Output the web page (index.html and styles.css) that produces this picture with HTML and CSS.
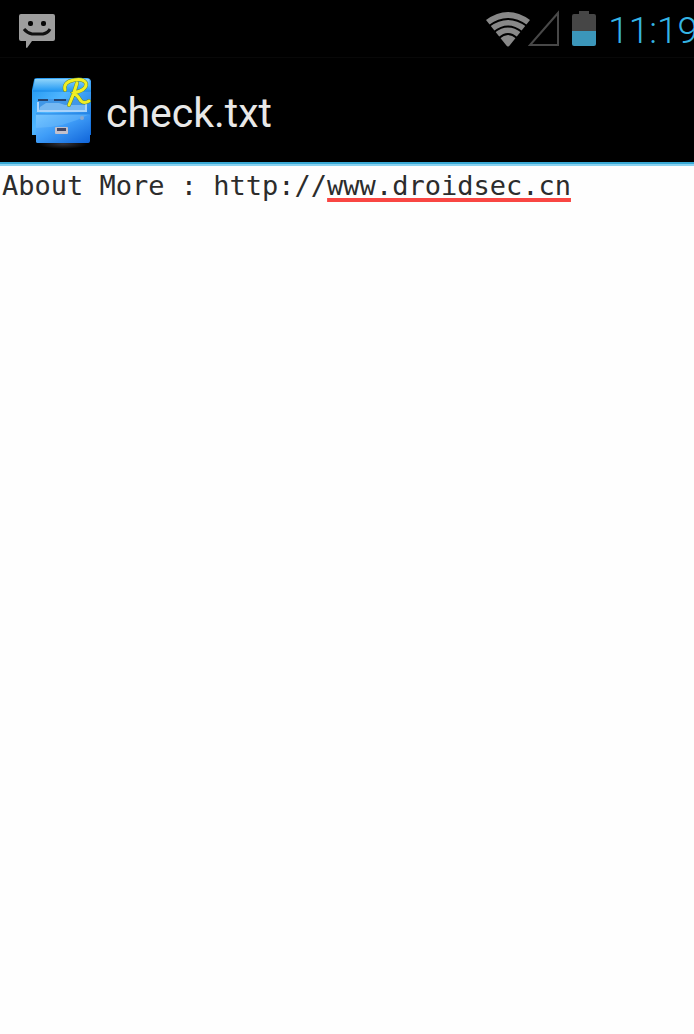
FILE: index.html
```html
<!DOCTYPE html>
<html lang="en">
<head>
<meta charset="utf-8">
<meta name="viewport" content="width=device-width, initial-scale=1">
<title>check.txt</title>
<link rel="stylesheet" href="styles.css">
</head>
<body>
<div class="status-bar">
  <svg class="message-icon" width="38" height="36" viewBox="0 0 38 36" aria-hidden="true">
    <path d="M3 1h32q2 0 2 2v23q0 2-2 2H14l-5 7q-1 0-1-1v-6H3q-2 0-2-2V3q0-2 2-2z" fill="#9d9d9d"/>
    <rect x="10" y="8" width="5" height="5" rx="2" fill="#050505"/>
    <rect x="23" y="8" width="5" height="5" rx="2" fill="#050505"/>
    <path d="M6 16q3 4 8 5h11q5-1 7-5" fill="none" stroke="#111" stroke-width="3"/>
  </svg>
  <div class="indicators">
    <svg class="wifi-icon" width="46" height="36" viewBox="0 0 46 36" aria-hidden="true">
      <path d="M1 9Q23-7 45 9L25 34q-2 3-4 0z" fill="#888"/>
      <path d="M4 15Q23 1 42 15M9 21Q23 10 37 21M14 27Q23 19 32 27" fill="none" stroke="#000" stroke-width="2"/>
    </svg>
    <svg class="signal-icon" width="34" height="38" viewBox="0 0 34 38" aria-hidden="true">
      <path d="M31 3v32H3z" fill="none" stroke="#484848" stroke-width="2"/>
    </svg>
    <svg class="battery-icon" width="24" height="36" viewBox="0 0 24 36" aria-hidden="true">
      <path d="M7 0h10v3h5q2 0 2 2v16H0V5q0-2 2-2h5z" fill="#464646"/>
      <path d="M0 20h24v13q0 2-2 2H2q-2 0-2-2z" fill="#3b96ba"/>
    </svg>
    <time class="clock">11:19</time>
  </div>
</div>
<header class="action-bar">
  <svg class="app-icon" width="64" height="74" viewBox="0 0 64 74" aria-hidden="true">
    <defs>
      <linearGradient id="cabinet" x1="0" y1="0" x2="1" y2="1">
        <stop offset="0" stop-color="#1c93ee"/>
        <stop offset=".4" stop-color="#50b6ff"/>
        <stop offset="1" stop-color="#0a62d6"/>
      </linearGradient>
      <linearGradient id="lid" x1="0" y1="0" x2="0" y2="1">
        <stop offset="0" stop-color="#8fd4fb"/>
        <stop offset="1" stop-color="#2a9df4"/>
      </linearGradient>
      <linearGradient id="drawer" x1="0" y1="0" x2="1" y2="1">
        <stop offset="0" stop-color="#6cc0ff"/>
        <stop offset=".45" stop-color="#3f9df8"/>
        <stop offset="1" stop-color="#1064d9"/>
      </linearGradient>
      <radialGradient id="shade">
        <stop offset="0" stop-color="#34343c"/>
        <stop offset="1" stop-color="#000"/>
      </radialGradient>
    </defs>
    <ellipse cx="33" cy="68" rx="25" ry="5" fill="url(#shade)"/>
    <path d="M4 4q0-2 3-2h50q3 0 4 3v54h-2v6q0 2-2 2H8q-2 0-2-2v-6H2V14z" fill="url(#cabinet)"/>
    <path d="M5 3h54l2 11H3z" fill="url(#lid)"/>
    <path d="M3 15h58" stroke="#1585e4"/>
    <path d="M8 23h48v12H8z" fill="#4097e8"/>
    <path d="M8 24h10m6 0h12" stroke="#24426f" stroke-width="2"/>
    <path d="M10 31l6-4h13l6 2h21v5H9z" fill="#76b8f2"/>
    <path d="M8 26v9h48v-8" fill="none" stroke="#a9d3fa" stroke-width="2"/>
    <path d="M6 38h54v27q0 2-2 2H8q-2 0-2-2z" fill="url(#drawer)"/>
    <path d="M6 38h54Q34 52 6 52z" fill="#94d6ff" opacity=".25"/>
    <path d="M6 38h54" stroke="#2585e4"/>
    <rect x="25" y="51" width="13" height="7" rx="1" fill="#c3c0cb"/>
    <path d="M27 52h9v3h-9z" fill="#424764"/>
    <circle cx="52" cy="42" r="2" fill="#8aa9d0"/>
    <path d="M47 7q-3 11-8 22M35 14q-2-8 9-10 9-2 12 3 1 5-6 8l-6 2q5 4 7 8 3 3 8 0" fill="none" stroke="#52834a" stroke-width="4" stroke-linecap="round"/>
    <path d="M47 7q-3 11-8 22M35 14q-2-8 9-10 9-2 12 3 1 5-6 8l-6 2q5 4 7 8 3 3 8 0" fill="none" stroke="#f2ee24" stroke-width="3" stroke-linecap="round"/>
  </svg>
  <h1 class="file-name">check.txt</h1>
</header>
<main class="editor" contenteditable="true" role="textbox" aria-multiline="true" aria-label="File contents" spellcheck="false">About More : http://<span class="misspelled">www.droidsec.cn</span></main>
</body>
</html>
```
FILE: styles.css
```css
* {
  box-sizing: border-box;
}

body {
  margin: 0;
  min-height: 100vh;
  display: flex;
  flex-direction: column;
  overflow-x: hidden;
  background: #fefefe;
}

svg {
  display: block;
  flex: none;
}

.status-bar {
  height: 58px;
  padding-left: 18px;
  display: flex;
  align-items: center;
  justify-content: space-between;
  background: #000;
  border-bottom: 1px solid #080808;
  overflow: hidden;
}

.message-icon {
  margin-top: 4px;
}

.indicators {
  display: flex;
  align-items: center;
  margin-right: -4px;
}

.signal-icon {
  margin-left: -4px;
}

.battery-icon {
  margin-left: 11px;
}

.clock {
  margin-left: 12px;
  padding-top: 4px;
  font: 300 37px/56px Roboto, sans-serif;
  color: #35b5e5;
}

.action-bar {
  height: 108px;
  padding: 4px 0 0 30px;
  display: flex;
  align-items: center;
  gap: 12px;
  background: #000;
  border-bottom: 2px solid #89d2f0;
  box-shadow: inset 0 -2px #38a8d4;
}

.file-name {
  margin: 0;
  font: 400 41px/48px Roboto, sans-serif;
  color: #e8e8e8;
}

.editor {
  flex: 1;
  padding: 4px 0 0 2px;
  font: 27px/32px "DejaVu Sans Mono", monospace;
  color: #2c2c2c;
  outline: none;
  overflow-wrap: anywhere;
}

.misspelled {
  text-decoration: underline 4px #f94643;
  text-decoration-skip-ink: none;
  text-underline-offset: 3px;
}
```
